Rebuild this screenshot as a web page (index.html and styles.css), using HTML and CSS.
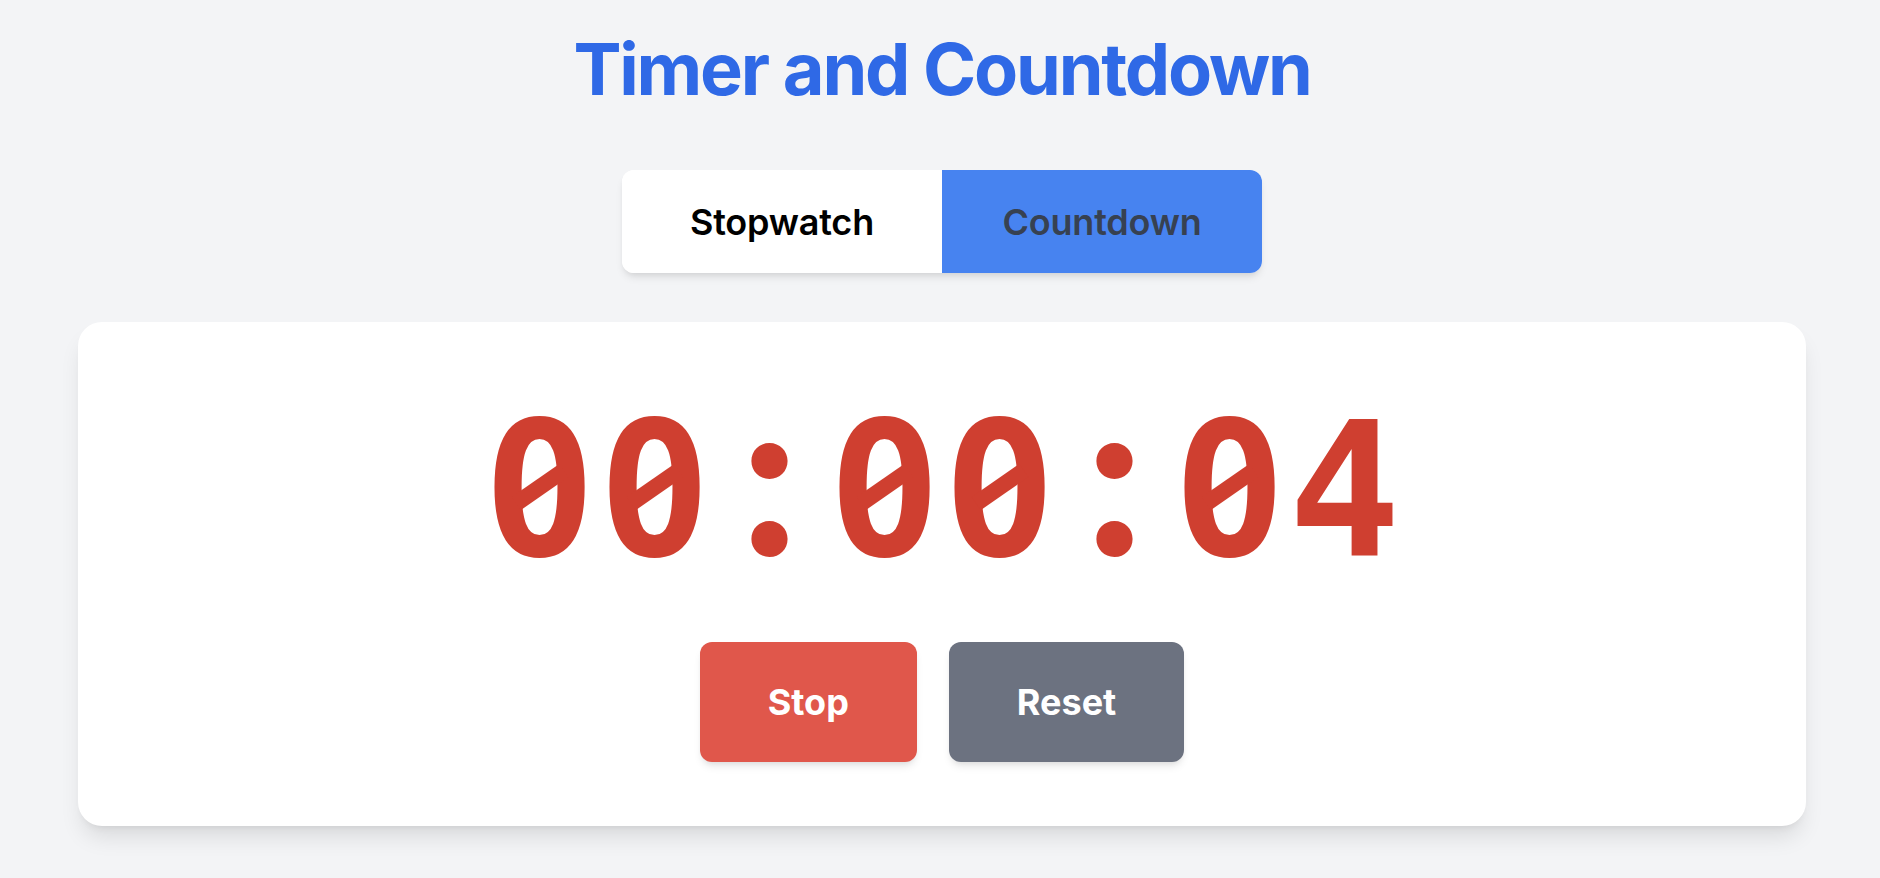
FILE: index.html
```html
<!DOCTYPE html>
<html lang="en">
<head>
<meta charset="utf-8">
<title>Timer and Countdown</title>
<link rel="stylesheet" href="styles.css">
</head>
<body>
<main class="page">
  <h1 class="title">Timer and Countdown</h1>
  <div class="mode-toggle">
    <button class="mode-btn">Stopwatch</button>
    <button class="mode-btn mode-btn--active">Countdown</button>
  </div>
  <section class="card">
    <div class="time"><span class="ch ch--zero">0</span><span class="ch ch--zero">0</span><span class="ch ch--colon">:</span><span class="ch ch--zero">0</span><span class="ch ch--zero">0</span><span class="ch ch--colon">:</span><span class="ch ch--zero">0</span><span class="ch">4</span></div>
    <div class="controls">
      <button class="ctrl ctrl--stop">Stop</button>
      <button class="ctrl ctrl--reset">Reset</button>
    </div>
  </section>
</main>
</body>
</html>
```

FILE: styles.css
```css
* { box-sizing: border-box; }

html, body {
  margin: 0;
  padding: 0;
  background: #f3f4f6;
}

body {
  font-family: Inter, "Noto Sans", "Liberation Sans", sans-serif;
  min-height: 878px;
}

.page {
  display: flex;
  flex-direction: column;
  align-items: center;
  padding: 33px 0 0 4px;
}

.title {
  margin: 0;
  font-size: 72px;
  line-height: 72px;
  font-weight: 700;
  color: #2f69e6;
  letter-spacing: -2.2px;
}

.mode-toggle {
  display: flex;
  margin-top: 65px;
  width: 640px;
  height: 103px;
  border-radius: 12px;
  overflow: hidden;
  background: #ffffff;
  box-shadow: 0 6px 9px -2px rgba(0,0,0,0.10), 0 3px 6px -3px rgba(0,0,0,0.08);
}

.mode-btn {
  flex: 1 1 0;
  display: flex;
  align-items: center;
  justify-content: center;
  border: none;
  margin: 0;
  padding: 0;
  background: #ffffff;
  font-family: inherit;
  font-size: 36px;
  font-weight: 600;
  color: #000000;
  letter-spacing: -0.2px;
}

.mode-btn--active {
  background: #4783f0;
  color: #374151;
}

.card {
  margin-top: 49px;
  width: 1728px;
  background: #ffffff;
  border-radius: 24px;
  padding: 72px 0 64px;
  display: flex;
  flex-direction: column;
  align-items: center;
  box-shadow: 0 15px 22px -4px rgba(0,0,0,0.10), 0 6px 9px -6px rgba(0,0,0,0.10);
}

.time {
  height: 192px;
  white-space: nowrap;
  font-family: "DejaVu Sans Mono", "Liberation Mono", monospace;
  font-weight: 700;
  font-size: 187px;
  line-height: 192px;
  color: #cf3f30;
}

.ch {
  position: relative;
  display: inline-block;
  width: 115px;
  text-align: center;
  vertical-align: baseline;
}

/* slashed zero, like the reference's monospace face */
.ch--zero::before {
  content: "";
  position: absolute;
  left: 50%;
  top: 93px;
  width: 30px;
  height: 62px;
  margin: -31px 0 0 -15px;
  border-radius: 15px;
  background: #ffffff;
}

.ch--zero::after {
  content: "";
  position: absolute;
  left: 50%;
  top: 93px;
  width: 58px;
  height: 16px;
  margin: -8px 0 0 -29px;
  background: #cf3f30;
  transform: rotate(-34.8deg);
}

.ch--colon {
  font-family: Inter, "DejaVu Sans", sans-serif;
  font-size: 214px;
  line-height: 100px;
}

.controls {
  display: flex;
  gap: 32px;
  margin-top: 56px;
}

.ctrl {
  height: 120px;
  padding: 0 68px;
  border: none;
  border-radius: 12px;
  font-family: inherit;
  font-size: 36px;
  font-weight: 700;
  color: #ffffff;
  display: flex;
  align-items: center;
  justify-content: center;
  box-shadow: 0 6px 9px -2px rgba(0,0,0,0.10), 0 3px 6px -3px rgba(0,0,0,0.08);
}

.ctrl--stop { background: #e0574b; }
.ctrl--reset { background: #6c7280; }
```
